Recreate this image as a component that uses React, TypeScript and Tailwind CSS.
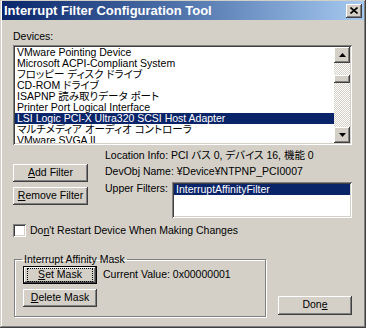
import type { ReactNode } from 'react';

const raised =
  'shadow-[inset_-1px_-1px_#404040,inset_1px_1px_#fff,inset_-2px_-2px_#808080,inset_2px_2px_#d4d0c8]';
const sunken =
  'shadow-[inset_1px_1px_#808080,inset_-1px_-1px_#fff,inset_2px_2px_#404040,inset_-2px_-2px_#d4d0c8]';

const devices = [
  'VMware Pointing Device',
  'Microsoft ACPI-Compliant System',
  'フロッピー ディスク ドライブ',
  'CD-ROM ドライブ',
  'ISAPNP 読み取りデータ ポート',
  'Printer Port Logical Interface',
  'LSI Logic PCI-X Ultra320 SCSI Host Adapter',
  'マルチメディア オーディオ コントローラ',
  'VMware SVGA II',
];

function Button({ children, className = '' }: { children: ReactNode; className?: string }) {
  return (
    <button className={`flex items-center justify-center bg-[#d4d0c8] ${raised} ${className}`}>
      {children}
    </button>
  );
}

function Arrow({ down }: { down?: boolean }) {
  return (
    <svg width="7" height="4" viewBox="0 0 7 4">
      <path d={down ? 'M0 0h7L3.5 4z' : 'M0 4h7L3.5 0z'} fill="#000" />
    </svg>
  );
}

export default function App() {
  return (
    <div
      className="w-[366px] h-[328px] bg-[#d4d0c8] pt-[1px] pl-[2px] pr-[2px] text-[10.5px] text-black shadow-[inset_-1px_-1px_#404040,inset_1px_1px_#d4d0c8,inset_-2px_-2px_#808080,inset_2px_2px_#fff] [font-family:'Liberation_Sans','Noto_Sans_CJK_JP',sans-serif] [font-feature-settings:'palt']"
    >
      {/* title bar */}
      <div className="h-[19px] flex items-center justify-between bg-gradient-to-r from-[#0a246a] to-[#a6caf0] pl-[2px] pr-[2px]">
        <span className="text-white font-bold text-[13px] leading-none">Interrupt Filter Configuration Tool</span>
        <div className={`w-[16px] h-[14px] bg-[#d4d0c8] flex items-center justify-center ${raised}`}>
          <svg width="8" height="7" viewBox="0 0 8 7">
            <path d="M0.5 0.5L7.5 6.5M7.5 0.5L0.5 6.5" stroke="#000" strokeWidth="1.6" />
          </svg>
        </div>
      </div>

      <div className="pl-[11px] pr-[12px]">
        <div className="mt-[10px] h-[13px] leading-[13px]">Devices:</div>

        {/* device list */}
        <div className={`mt-[2px] h-[100px] bg-white p-[2px] flex ${sunken}`}>
          <div className="flex-1 overflow-hidden">
            {devices.map((d, i) => (
              <div
                key={d}
                className={`h-[11px] leading-[11px] pl-[2px] whitespace-nowrap ${
                  i === 6 ? 'bg-[#0a246a] text-white' : ''
                }`}
              >
                {d}
              </div>
            ))}
          </div>
          <div className="w-[16px] flex flex-col bg-[repeating-conic-gradient(#fff_0_25%,#d4d0c8_0_50%)] bg-[length:2px_2px]">
            <div className={`h-[16px] bg-[#d4d0c8] flex items-center justify-center ${raised}`}>
              <Arrow />
            </div>
            <div className={`mt-[12px] h-[8px] bg-[#d4d0c8] ${raised}`} />
            <div className="flex-1" />
            <div className={`h-[16px] bg-[#d4d0c8] flex items-center justify-center ${raised}`}>
              <Arrow down />
            </div>
          </div>
        </div>

        {/* details */}
        <div className="mt-[2px] flex">
          <div className="w-[75px] pt-[17px] flex flex-col gap-[5px]">
            <Button className="h-[18px]">
              <span>
                <u>A</u>dd Filter
              </span>
            </Button>
            <Button className="h-[18px]">
              <span>
                <u>R</u>emove Filter
              </span>
            </Button>
          </div>
          <div className="ml-[17px] flex-1">
            <div className="h-[16px] leading-[16px] whitespace-nowrap">Location Info: PCI バス 0, デバイス 16, 機能 0</div>
            <div className="h-[16px] leading-[16px] whitespace-nowrap">DevObj Name: ¥Device¥NTPNP_PCI0007</div>
            <div className="mt-[3px] flex">
              <div className="w-[62px] text-right leading-[13px] whitespace-nowrap">Upper Filters:</div>
              <div className={`ml-[5px] flex-1 h-[36px] bg-white p-[2px] ${sunken}`}>
                <div className="h-[11px] leading-[11px] pl-[2px] bg-[#0a246a] text-white">InterruptAffinityFilter</div>
              </div>
            </div>
          </div>
        </div>

        {/* checkbox */}
        <div className="mt-[5px] flex items-center gap-[4px]">
          <div className={`w-[13px] h-[13px] bg-white ${sunken}`} />
          <span>
            Do<u>n</u>'t Restart Device When Making Changes
          </span>
        </div>

        {/* mask group + done */}
        <div className="mt-[14px] flex items-end">
          <fieldset className="ml-[1px] w-[252px] h-[64px] border border-[#808080] shadow-[1px_1px_#fff,inset_1px_1px_#fff] pl-[8px] pr-[4px]">
            <legend className="ml-[-1px] px-[2px] leading-[13px]">Interrupt Affinity Mask</legend>
            <div className="flex items-center">
              <div className="w-[74px] h-[18px] border border-black">
                <Button className="w-full h-full">
                  <span className="w-[64px] h-[12px] flex items-center justify-center outline-1 outline-dotted outline-black">
                    <span>
                      <u>S</u>et Mask
                    </span>
                  </span>
                </Button>
              </div>
              <span className="ml-[6px] whitespace-nowrap">Current Value: 0x00000001</span>
            </div>
            <Button className="mt-[5px] w-[74px] h-[18px]">
              <span>
                <u>D</u>elete Mask
              </span>
            </Button>
          </fieldset>
          <Button className="ml-[12px] mb-[2px] w-[74px] h-[19px]">
            <span>
              Don<u>e</u>
            </span>
          </Button>
        </div>
      </div>
    </div>
  );
}
